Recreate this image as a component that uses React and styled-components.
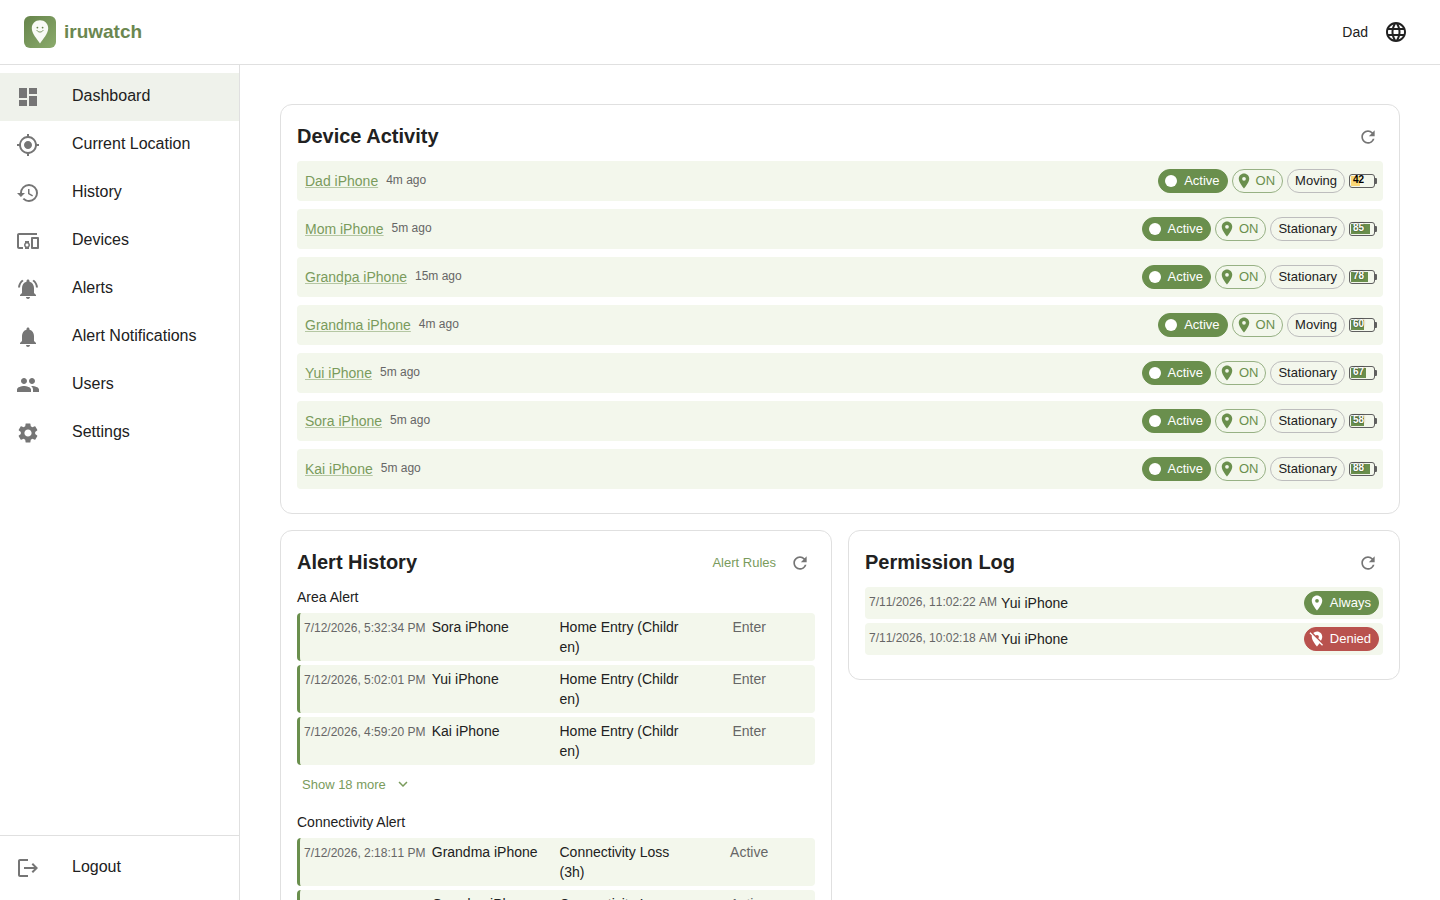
import React from 'react'
import styled, { createGlobalStyle, ThemeProvider } from 'styled-components'
import {
  MdDashboard,
  MdMyLocation,
  MdHistory,
  MdDevicesOther,
  MdNotificationsActive,
  MdNotifications,
  MdPeople,
  MdSettings,
  MdLogout,
  MdLanguage,
  MdRefresh,
  MdLocationOn,
  MdLocationOff,
  MdFiberManualRecord,
  MdExpandMore,
} from 'react-icons/md'

const theme = {
  primary: '#7a9b5c',
  success: '#6a8f4d',
  error: '#b9524e',
  warning: '#fbd876',
  brand: '#6b8750',
  text: '#212121',
  textSecondary: '#666666',
  icon: '#757575',
  divider: '#e0e0e0',
  row: '#f3f7ec',
  selected: '#eff2eb',
}

const GlobalStyle = createGlobalStyle`
  * {
    box-sizing: border-box;
  }

  body {
    margin: 0;
    background: #fff;
    color: ${theme.text};
    font-family: 'Liberation Sans', Arial, sans-serif;
    font-size: 14px;
    line-height: 20px;
  }

  button {
    font-family: inherit;
    border: 0;
    background: none;
    cursor: pointer;
  }
`

const Shell = styled.div`
  display: flex;
  flex-direction: column;
  height: 100vh;
`

const Header = styled.header`
  display: flex;
  align-items: center;
  justify-content: space-between;
  flex: none;
  height: 65px;
  padding: 0 24px;
  border-bottom: 1px solid ${({ theme }) => theme.divider};
`

const Brand = styled.a`
  display: flex;
  align-items: center;
  gap: 8px;
  color: ${({ theme }) => theme.brand};
  font-size: 19px;
  font-weight: 700;
  text-decoration: none;
`

const UserArea = styled.div`
  display: flex;
  align-items: center;
  gap: 8px;
`

const IconButton = styled.button`
  display: flex;
  align-items: center;
  justify-content: center;
  width: ${({ $size }) => $size}px;
  height: ${({ $size }) => $size}px;
  padding: 0;
  border-radius: 50%;
  color: ${({ theme, $dark }) => ($dark ? theme.text : theme.icon)};
`

const Body = styled.div`
  display: flex;
  flex: 1;
  min-height: 0;
`

const Sidebar = styled.nav`
  display: flex;
  flex-direction: column;
  justify-content: space-between;
  flex: none;
  width: 240px;
  border-right: 1px solid ${({ theme }) => theme.divider};
`

const NavList = styled.ul`
  margin: 0;
  padding: 8px 0;
  list-style: none;
  border-top: ${({ theme, $divided }) => ($divided ? `1px solid ${theme.divider}` : '0')};
`

const NavLink = styled.a`
  display: flex;
  align-items: center;
  gap: 32px;
  height: 48px;
  padding: 0 16px;
  background: ${({ theme, $active }) => ($active ? theme.selected : 'transparent')};
  color: ${({ theme }) => theme.text};
  font-size: 16px;
  line-height: 24px;
  text-decoration: none;

  svg {
    color: ${({ theme }) => theme.icon};
  }

  span {
    padding-bottom: 2px;
  }
`

const Main = styled.main`
  flex: 1;
  min-width: 0;
  padding: 39px 40px;
  overflow: auto;
  scrollbar-width: none;
`

const CardGrid = styled.div`
  display: grid;
  grid-template-columns: 1fr 1fr;
  gap: 16px;
  align-items: start;
`

const Card = styled.section`
  grid-column: ${({ $wide }) => ($wide ? '1 / -1' : 'auto')};
  min-width: 0;
  padding: 16px 16px 24px;
  border: 1px solid ${({ theme }) => theme.divider};
  border-radius: 12px;
`

const CardHeader = styled.div`
  display: flex;
  align-items: center;
  justify-content: space-between;
  height: 32px;
  margin-bottom: 8px;
`

const CardTitle = styled.h2`
  margin: 0;
  padding-bottom: 2px;
  font-size: 20px;
  font-weight: 700;
  line-height: 30px;
`

const CardActions = styled.div`
  display: flex;
  align-items: center;
  gap: 4px;
`

const TextLink = styled.a`
  padding: 4px 5px;
  color: ${({ theme }) => theme.primary};
  font-size: 13px;
  text-decoration: none;
`

const RowList = styled.ul`
  display: flex;
  flex-direction: column;
  gap: ${({ $gap }) => $gap}px;
  margin: 0;
  padding: 0;
  list-style: none;
`

const DeviceRow = styled.li`
  display: flex;
  align-items: center;
  justify-content: space-between;
  padding: 8px;
  background: ${({ theme }) => theme.row};
  border-radius: 4px;
`

const PermissionRow = styled(DeviceRow)`
  padding: 4px;
`

const Time = styled.time`
  color: ${({ theme }) => theme.textSecondary};
  font-size: 12px;
  font-kerning: none;
  white-space: nowrap;
`

const Group = styled.div`
  display: flex;
  align-items: center;
  gap: ${({ $gap }) => $gap}px;

  ${Time} {
    padding-bottom: 2px;
  }
`

const DeviceLink = styled.a`
  color: ${({ theme }) => theme.primary};
  text-decoration: underline;
  text-decoration-color: #b5c7a3;
`

const chipColors = {
  active: ({ theme }) => `background: ${theme.success}; border-color: ${theme.success}; color: #fff;`,
  denied: ({ theme }) => `background: ${theme.error}; border-color: ${theme.error}; color: #fff;`,
  on: ({ theme }) => `border-color: #97b184; color: ${theme.success};`,
  plain: () => 'border-color: #bdbdbd;',
}

const Chip = styled.span`
  display: inline-flex;
  align-items: center;
  gap: ${({ $solid }) => ($solid ? 4 : 3)}px;
  height: 24px;
  padding: 0 7px 0 ${({ $icon, $solid }) => ($icon ? ($solid ? 3 : 2) : 7)}px;
  border: 1px solid;
  border-radius: 12px;
  font-size: 13px;
  white-space: nowrap;
  ${({ $kind, theme }) => chipColors[$kind]({ theme })}
`

const BatteryBody = styled.span`
  position: relative;
  display: block;
  width: 26px;
  height: 14px;
  padding: 1px;
  border: 1px solid #5f5f5f;
  border-radius: 3px;

  &::after {
    content: '';
    position: absolute;
    top: 3px;
    right: -3px;
    width: 2px;
    height: 6px;
    background: #5f5f5f;
    border-radius: 0 1px 1px 0;
  }
`

const BatteryFill = styled.span`
  display: block;
  height: 100%;
  background: ${({ theme, $low }) => ($low ? theme.warning : theme.success)};
`

const BatteryText = styled.span`
  position: absolute;
  top: 0;
  left: 3px;
  color: ${({ $low }) => ($low ? '#000' : '#fff')};
  font-size: 10px;
  font-weight: 700;
  line-height: 10px;
  text-shadow: ${({ $low }) => ($low ? 'none' : '0 0 2px rgba(0, 0, 0, 0.6)')};
`

const SectionTitle = styled.h3`
  margin: 0 0 6px;
  font-size: 14px;
  font-weight: 400;
  line-height: 20px;
`

const AlertTable = styled.table`
  display: block;

  tbody {
    display: flex;
    flex-direction: column;
    gap: 4px;
  }

  tr {
    display: grid;
    grid-template-columns: repeat(4, minmax(0, 1fr));
    gap: 4px;
    padding: 4px;
    background: ${({ theme }) => theme.row};
    border-left: 3px solid ${({ theme }) => theme.success};
    border-radius: 4px;
  }

  td {
    padding: 0;
    word-break: break-all;
  }
`

const StatusCell = styled.td`
  color: ${({ theme }) => theme.textSecondary};
  text-align: center;
`

const MoreButton = styled.button`
  display: flex;
  align-items: center;
  gap: 8px;
  height: 30px;
  margin: 4px 0 13px;
  padding: 0 5px;
  color: ${({ theme }) => theme.primary};
  font-size: 13px;
`

const navItems = [
  { label: 'Dashboard', icon: MdDashboard, active: true },
  { label: 'Current Location', icon: MdMyLocation },
  { label: 'History', icon: MdHistory },
  { label: 'Devices', icon: MdDevicesOther },
  { label: 'Alerts', icon: MdNotificationsActive },
  { label: 'Alert Notifications', icon: MdNotifications },
  { label: 'Users', icon: MdPeople },
  { label: 'Settings', icon: MdSettings },
]

const devices = [
  { name: 'Dad iPhone', ago: '4m ago', motion: 'Moving', battery: 42 },
  { name: 'Mom iPhone', ago: '5m ago', motion: 'Stationary', battery: 85 },
  { name: 'Grandpa iPhone', ago: '15m ago', motion: 'Stationary', battery: 78 },
  { name: 'Grandma iPhone', ago: '4m ago', motion: 'Moving', battery: 60 },
  { name: 'Yui iPhone', ago: '5m ago', motion: 'Stationary', battery: 67 },
  { name: 'Sora iPhone', ago: '5m ago', motion: 'Stationary', battery: 58 },
  { name: 'Kai iPhone', ago: '5m ago', motion: 'Stationary', battery: 88 },
]

const areaAlerts = [
  { time: '7/12/2026, 5:32:34 PM', device: 'Sora iPhone', rule: 'Home Entry (Children)', status: 'Enter' },
  { time: '7/12/2026, 5:02:01 PM', device: 'Yui iPhone', rule: 'Home Entry (Children)', status: 'Enter' },
  { time: '7/12/2026, 4:59:20 PM', device: 'Kai iPhone', rule: 'Home Entry (Children)', status: 'Enter' },
]

const connectivityAlerts = [
  { time: '7/12/2026, 2:18:11 PM', device: 'Grandma iPhone', rule: 'Connectivity Loss (3h)', status: 'Active' },
  { time: '7/12/2026, 1:18:10 PM', device: 'Grandpa iPhone', rule: 'Connectivity Loss (3h)', status: 'Active' },
]

const permissions = [
  { time: '7/11/2026, 11:02:22 AM', device: 'Yui iPhone', granted: true },
  { time: '7/11/2026, 10:02:18 AM', device: 'Yui iPhone', granted: false },
]

function Logo() {
  return (
    <svg width="32" height="32" viewBox="0 0 32 32" aria-hidden="true">
      <defs>
        <linearGradient id="logo" x1="0" y1="0" x2="1" y2="1">
          <stop offset="0" stopColor="#66844b" />
          <stop offset="1" stopColor="#8bab6c" />
        </linearGradient>
      </defs>
      <rect width="32" height="32" rx="6" fill="url(#logo)" />
      <path
        d="M16 4.2c-4.7 0-8.2 3.5-8.2 8 0 5.6 5.2 10.6 8.2 15.2 3-4.6 8.2-9.6 8.2-15.2 0-4.5-3.5-8-8.2-8z"
        fill="#f8faf5"
      />
      <circle cx="13.4" cy="11.6" r="0.9" fill="#66844b" />
      <circle cx="18.6" cy="11.6" r="0.9" fill="#66844b" />
      <path d="M13 14.6c1.5 2 4.5 2 6 0" fill="none" stroke="#66844b" strokeWidth="0.9" strokeLinecap="round" />
    </svg>
  )
}

function Battery({ level }) {
  const low = level < 50
  return (
    <BatteryBody>
      <BatteryFill $low={low} style={{ width: `${level}%` }} />
      <BatteryText $low={low}>{level}</BatteryText>
    </BatteryBody>
  )
}

function RefreshButton() {
  return (
    <IconButton $size={30} aria-label="Refresh">
      <MdRefresh size={20} />
    </IconButton>
  )
}

function Alerts({ rows }) {
  return (
    <AlertTable>
      <tbody>
        {rows.map(row => (
          <tr key={row.time}>
            <td>
              <Time>{row.time}</Time>
            </td>
            <td>{row.device}</td>
            <td>{row.rule}</td>
            <StatusCell>{row.status}</StatusCell>
          </tr>
        ))}
      </tbody>
    </AlertTable>
  )
}

function ShowMore({ count }) {
  return (
    <MoreButton>
      Show {count} more
      <MdExpandMore size={18} />
    </MoreButton>
  )
}

function App() {
  return (
    <ThemeProvider theme={theme}>
      <GlobalStyle />
      <Shell>
        <Header>
          <Brand href="#">
            <Logo />
            iruwatch
          </Brand>
          <UserArea>
            <span>Dad</span>
            <IconButton $size={40} $dark aria-label="Language">
              <MdLanguage size={24} />
            </IconButton>
          </UserArea>
        </Header>
        <Body>
          <Sidebar>
            <NavList>
              {navItems.map(({ label, icon: Icon, active }) => (
                <li key={label}>
                  <NavLink href="#" $active={active}>
                    <Icon size={24} />
                    <span>{label}</span>
                  </NavLink>
                </li>
              ))}
            </NavList>
            <NavList $divided>
              <li>
                <NavLink href="#">
                  <MdLogout size={24} />
                  <span>Logout</span>
                </NavLink>
              </li>
            </NavList>
          </Sidebar>
          <Main>
            <CardGrid>
              <Card $wide>
                <CardHeader>
                  <CardTitle>Device Activity</CardTitle>
                  <RefreshButton />
                </CardHeader>
                <RowList $gap={8}>
                  {devices.map(device => (
                    <DeviceRow key={device.name}>
                      <Group $gap={8}>
                        <DeviceLink href="#">{device.name}</DeviceLink>
                        <Time>{device.ago}</Time>
                      </Group>
                      <Group $gap={4}>
                        <Chip $kind="active" $icon $solid>
                          <MdFiberManualRecord size={18} />
                          Active
                        </Chip>
                        <Chip $kind="on" $icon>
                          <MdLocationOn size={18} />
                          ON
                        </Chip>
                        <Chip $kind="plain">{device.motion}</Chip>
                        <Battery level={device.battery} />
                      </Group>
                    </DeviceRow>
                  ))}
                </RowList>
              </Card>

              <Card>
                <CardHeader>
                  <CardTitle>Alert History</CardTitle>
                  <CardActions>
                    <TextLink href="#">Alert Rules</TextLink>
                    <RefreshButton />
                  </CardActions>
                </CardHeader>
                <SectionTitle>Area Alert</SectionTitle>
                <Alerts rows={areaAlerts} />
                <ShowMore count={18} />
                <SectionTitle>Connectivity Alert</SectionTitle>
                <Alerts rows={connectivityAlerts} />
              </Card>

              <Card>
                <CardHeader>
                  <CardTitle>Permission Log</CardTitle>
                  <RefreshButton />
                </CardHeader>
                <RowList $gap={4}>
                  {permissions.map(item => (
                    <PermissionRow key={item.time}>
                      <Group $gap={4}>
                        <Time>{item.time}</Time>
                        <span>{item.device}</span>
                      </Group>
                      <Chip $kind={item.granted ? 'active' : 'denied'} $icon $solid>
                        {item.granted ? <MdLocationOn size={18} /> : <MdLocationOff size={18} />}
                        {item.granted ? 'Always' : 'Denied'}
                      </Chip>
                    </PermissionRow>
                  ))}
                </RowList>
              </Card>
            </CardGrid>
          </Main>
        </Body>
      </Shell>
    </ThemeProvider>
  )
}

export default App
